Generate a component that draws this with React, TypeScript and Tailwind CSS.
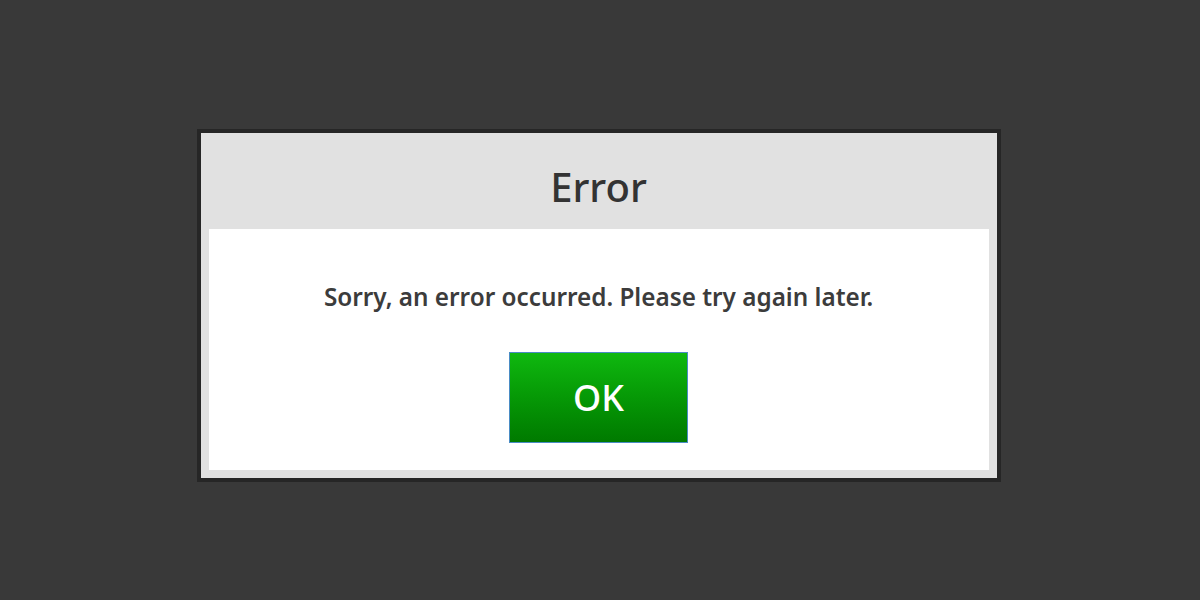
export default function App() {
  return (
    <div className="w-[1200px] h-[600px] bg-[#393939] flex items-start justify-center pt-[129px] font-['Noto_Sans','Open_Sans',sans-serif]">
      <div className="w-[804px] -ml-[3px] border-4 border-[#262626] bg-[#e1e1e1] px-2 pb-2">
        <div className="h-[96px] flex items-center justify-center">
          <h1 className="text-[40px] font-medium text-[#333333] leading-none mt-3">Error</h1>
        </div>
        <div className="bg-white flex flex-col items-center pt-[56px] pb-[27px]">
          <p className="text-[24.3px] font-semibold text-[#3c3c3c] leading-none">
            Sorry, an error occurred. Please try again later.
          </p>
          <button className="mt-[43px] w-[179px] h-[91px] border border-[#4a8cc4] bg-gradient-to-b from-[#0fb80f] to-[#007a00] text-white text-[36px] font-medium flex items-center justify-center">
            OK
          </button>
        </div>
      </div>
    </div>
  )
}
